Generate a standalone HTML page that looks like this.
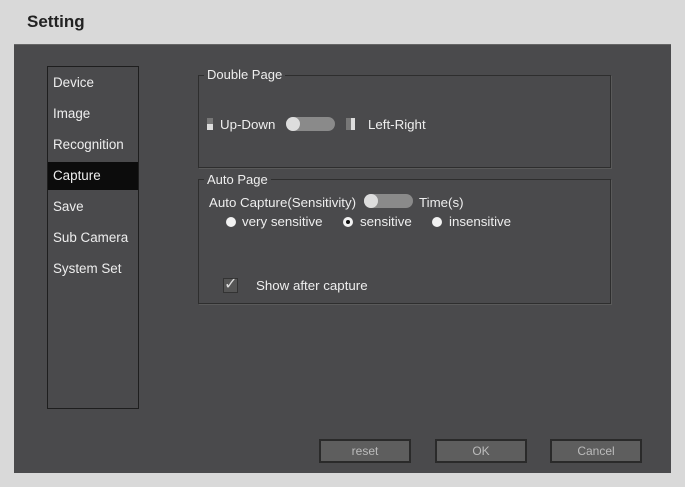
<!DOCTYPE html>
<html><head><style>
*{margin:0;padding:0;box-sizing:border-box}
body{width:685px;height:487px;background:#d9d9d9;font-family:"Liberation Sans",sans-serif;position:relative;overflow:hidden;color:#e8e8e8}
.a{position:absolute}
.title{left:27px;top:12px;font-size:17px;font-weight:bold;color:#222}
.panel{left:14px;top:44px;width:657px;height:429px;background:#4a4a4c;border-top:1px solid #666}
.nav{left:47px;top:66px;width:92px;height:343px;border:1px solid #1e1e1e;background:#4a4a4c}
.ni{position:absolute;left:6px;font-size:13.4px;color:#eee}
.sel{left:48px;top:162px;width:90px;height:28px;background:#0c0c0c}
.grp{border:1px solid #2e2e2e;box-shadow:1px 1px 0 #5a5a5a}
.lbl{font-size:13px;color:#eee;background:#4a4a4c;padding:0 3px}
.t{font-size:13.3px;color:#eee}
.sw{height:14px;border-radius:7px;background:#8a8a8a}
.knob{width:14px;height:14px;border-radius:7px;background:#ddd}
.rad{width:10px;height:10px;border-radius:5px;background:#f2f2f2}
.btn{width:92px;height:24px;background:#5e5e5e;border:2px solid #2a2a2a;font-size:12px;color:#bbb;text-align:center;line-height:20px}
</style></head><body>
<div class="a title">Setting</div>
<div class="a panel"></div>
<div class="a nav"></div>
<div class="a sel"></div>
<div class="a" style="left:47px;top:66px;width:92px;height:343px">
<div class="ni" style="top:9px">Device</div>
<div class="ni" style="top:40px">Image</div>
<div class="ni" style="top:71px">Recognition</div>
<div class="ni" style="top:102px">Capture</div>
<div class="ni" style="top:133px">Save</div>
<div class="ni" style="top:164px">Sub Camera</div>
<div class="ni" style="top:195px">System Set</div>
</div>
<div class="a grp" style="left:198px;top:75px;width:413px;height:93px"></div>
<div class="a lbl" style="left:204px;top:67px">Double Page</div>
<div class="a" style="left:207px;top:118px;width:6px;height:12px;background:#777"></div>
<div class="a" style="left:207px;top:124px;width:6px;height:6px;background:#ddd"></div>
<div class="a t" style="left:220px;top:117px">Up-Down</div>
<div class="a sw" style="left:286px;top:117px;width:49px"></div>
<div class="a knob" style="left:286px;top:117px"></div>
<div class="a" style="left:346px;top:118px;width:9px;height:12px;background:#777"></div>
<div class="a" style="left:351px;top:118px;width:4px;height:12px;background:#ddd"></div>
<div class="a t" style="left:368px;top:117px">Left-Right</div>
<div class="a grp" style="left:198px;top:179px;width:413px;height:125px"></div>
<div class="a lbl" style="left:204px;top:172px">Auto Page</div>
<div class="a t" style="left:209px;top:195px">Auto Capture(Sensitivity)</div>
<div class="a sw" style="left:364px;top:194px;width:49px"></div>
<div class="a knob" style="left:364px;top:194px"></div>
<div class="a t" style="left:419px;top:195px">Time(s)</div>
<div class="a rad" style="left:226px;top:217px"></div>
<div class="a t" style="left:242px;top:214px">very sensitive</div>
<div class="a rad" style="left:343px;top:217px"></div>
<div class="a" style="left:346px;top:220px;width:4px;height:4px;border-radius:2px;background:#111"></div>
<div class="a t" style="left:360px;top:214px">sensitive</div>
<div class="a rad" style="left:432px;top:217px"></div>
<div class="a t" style="left:449px;top:214px">insensitive</div>
<div class="a" style="left:223px;top:278px;width:15px;height:15px;border:1px solid #333;background:#555"></div>
<div class="a" style="left:224px;top:274px;font-size:16px;color:#ddd">✓</div>
<div class="a t" style="left:256px;top:278px">Show after capture</div>
<div class="a btn" style="left:319px;top:439px">reset</div>
<div class="a btn" style="left:435px;top:439px">OK</div>
<div class="a btn" style="left:550px;top:439px">Cancel</div>
</body></html>
